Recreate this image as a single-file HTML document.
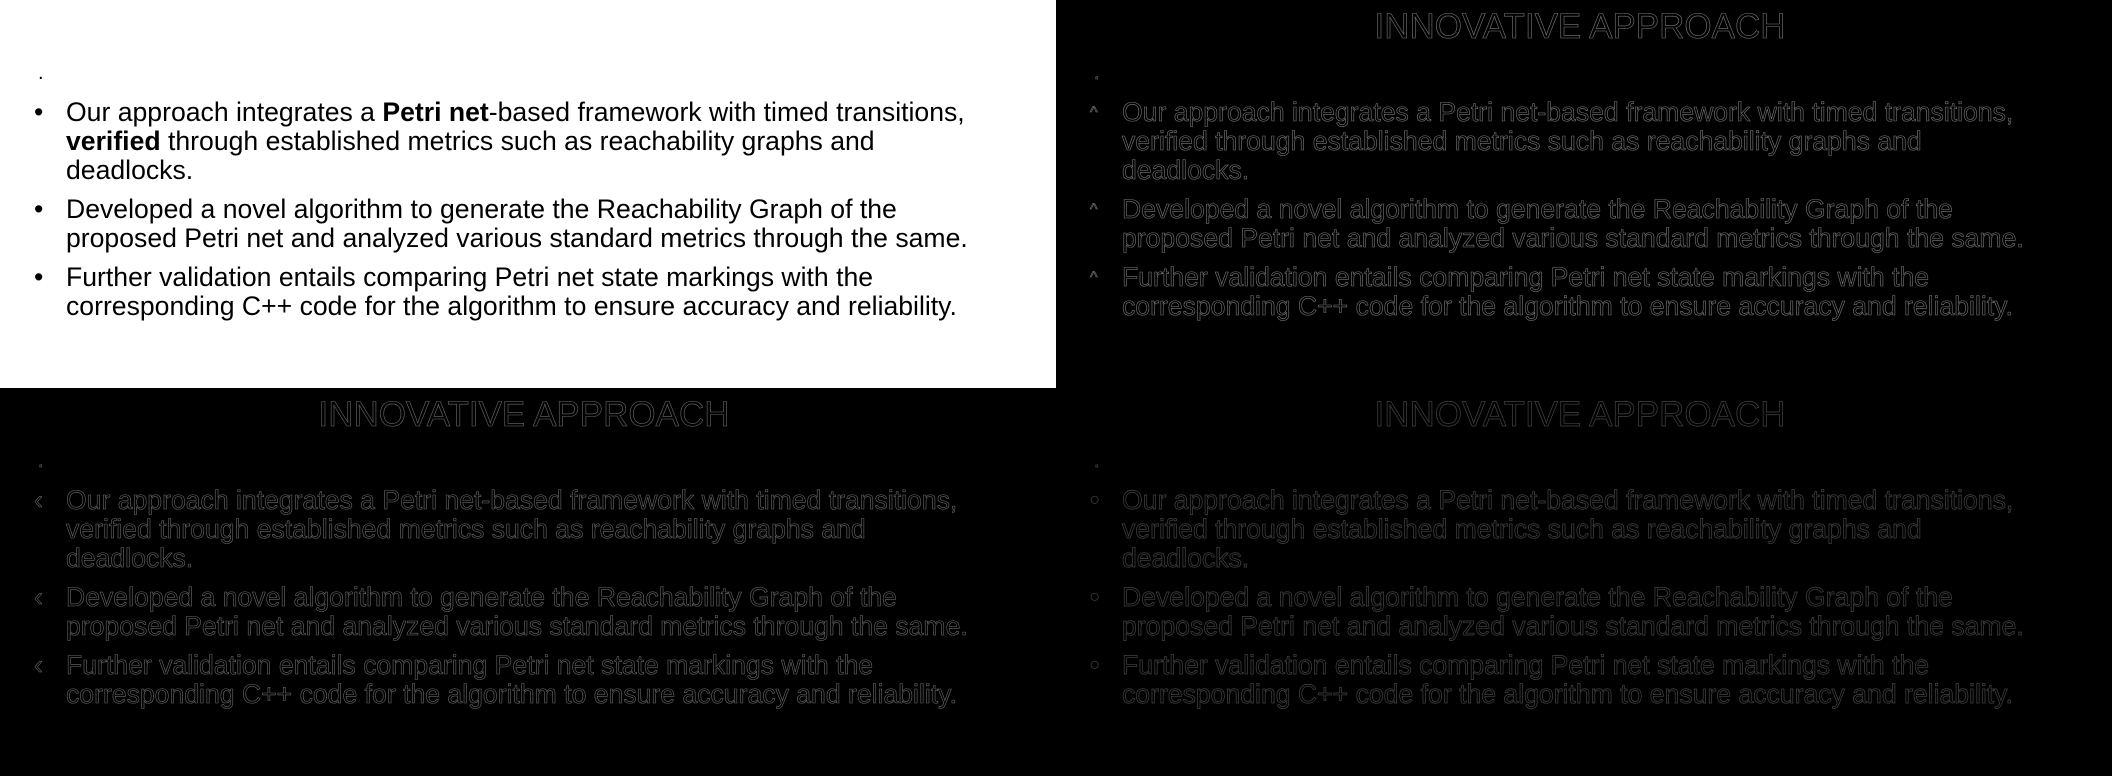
<!DOCTYPE html>
<html><head><meta charset="utf-8"><style>
html,body{margin:0;padding:0;background:#000;}
body{width:2112px;height:776px;position:relative;overflow:hidden;font-family:"Liberation Sans",Arial,sans-serif;}
.q{position:absolute;width:1056px;height:388px;overflow:hidden;background:#000;}
.t{position:absolute;left:-4px;width:1056px;top:7px;text-align:center;font-size:35px;line-height:40px;white-space:nowrap;}
.dot{position:absolute;left:38px;top:62px;font-size:20px;}
ul{position:absolute;left:0;top:98px;margin:0;padding:0;list-style:none;font-size:26.6px;line-height:29px;}
li{position:relative;padding-left:66px;margin-bottom:10px;white-space:nowrap;}
li:before{content:"•";position:absolute;left:34px;top:0;}
.w{background:#fff;color:#000;}
.w .t{display:none;}
.o{color:transparent;-webkit-text-stroke:0.6px #7a7a7a;}
.o b{font-weight:normal;}
.o li:before{content:"^";font-size:16px;}
.bl{color:transparent;-webkit-text-stroke:0.6px #6a6a6a;}
.bl b{font-weight:normal;}
.bl li:before{content:"‹";}
.br{color:transparent;-webkit-text-stroke:0.7px #444;}
.br b{font-weight:normal;}
</style></head><body>

<div class="q w" style="left:0;top:0;">
<div class="t">INNOVATIVE APPROACH</div>
<div class="dot">.</div>
<ul>
<li>Our approach integrates a <b>Petri net</b>-based framework with timed transitions,<br><b>verified</b> through established metrics such as reachability graphs and<br>deadlocks.</li>
<li>Developed a novel algorithm to generate the Reachability Graph of the<br>proposed Petri net and analyzed various standard metrics through the same.</li>
<li>Further validation entails comparing Petri net state markings with the<br>corresponding C++ code for the algorithm to ensure accuracy and reliability.</li>
</ul></div>

<div class="q o" style="left:1056px;top:0;">
<div class="t">INNOVATIVE APPROACH</div>
<div class="dot">.</div>
<ul>
<li>Our approach integrates a <b>Petri net</b>-based framework with timed transitions,<br><b>verified</b> through established metrics such as reachability graphs and<br>deadlocks.</li>
<li>Developed a novel algorithm to generate the Reachability Graph of the<br>proposed Petri net and analyzed various standard metrics through the same.</li>
<li>Further validation entails comparing Petri net state markings with the<br>corresponding C++ code for the algorithm to ensure accuracy and reliability.</li>
</ul></div>

<div class="q bl" style="left:0;top:388px;">
<div class="t">INNOVATIVE APPROACH</div>
<div class="dot">.</div>
<ul>
<li>Our approach integrates a <b>Petri net</b>-based framework with timed transitions,<br><b>verified</b> through established metrics such as reachability graphs and<br>deadlocks.</li>
<li>Developed a novel algorithm to generate the Reachability Graph of the<br>proposed Petri net and analyzed various standard metrics through the same.</li>
<li>Further validation entails comparing Petri net state markings with the<br>corresponding C++ code for the algorithm to ensure accuracy and reliability.</li>
</ul></div>

<div class="q br" style="left:1056px;top:388px;">
<div class="t">INNOVATIVE APPROACH</div>
<div class="dot">.</div>
<ul>
<li>Our approach integrates a <b>Petri net</b>-based framework with timed transitions,<br><b>verified</b> through established metrics such as reachability graphs and<br>deadlocks.</li>
<li>Developed a novel algorithm to generate the Reachability Graph of the<br>proposed Petri net and analyzed various standard metrics through the same.</li>
<li>Further validation entails comparing Petri net state markings with the<br>corresponding C++ code for the algorithm to ensure accuracy and reliability.</li>
</ul></div>

</body></html>
